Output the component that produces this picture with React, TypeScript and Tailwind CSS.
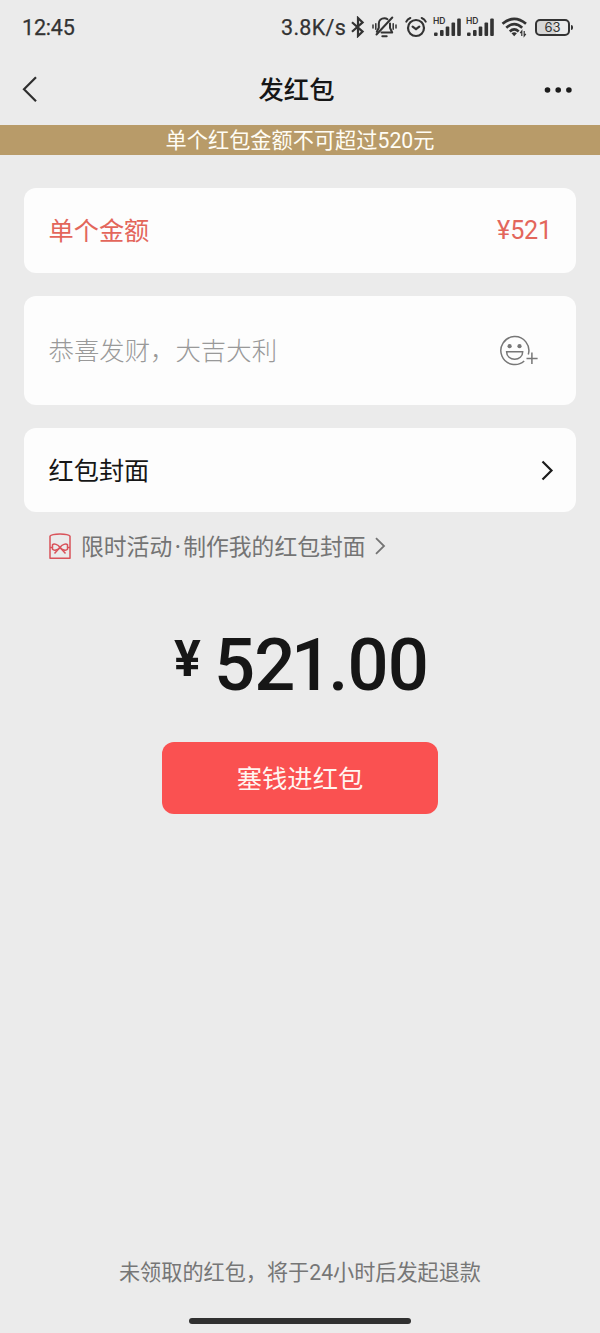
import type { ReactNode } from 'react';

const FONT = "font-['Noto_Sans_CJK_SC',sans-serif]";

function BluetoothIcon() {
  return (
    <svg className="ml-[3px] h-[22px] w-[16px] shrink-0" viewBox="0 0 16 22" fill="none" stroke="#333" strokeWidth="2.200" strokeLinejoin="miter">
      <path d="M2 6.200 12.600 15.600 8 20V2l4.600 4.400L2 15.800" />
    </svg>
  );
}

function MutedBellIcon() {
  return (
    <svg className="ml-[6px] h-[24px] w-[25px] shrink-0" viewBox="0 0 25 24" fill="none" stroke="#333" strokeWidth="2" strokeLinecap="round" strokeLinejoin="round">
      <path d="M15.500 4.200C14.600 3.500 13.600 3.200 12.400 3.200c-3.200 0-5.600 2.400-5.600 5.600v4L4.800 16.800M18 8.500v4.300l2.200 4.700H9.500" />
      <path d="M20.300 2.500 4.500 19.500" />
      <path d="M10.300 21.200h4.400" />
      <path d="M3.800 8.800v5.400M1 10v3M21.200 8.800v5.400M24 10v3" strokeWidth="1.500" />
    </svg>
  );
}

function AlarmIcon() {
  return (
    <svg className="ml-[8px] h-[24px] w-[22px] shrink-0" viewBox="0 0 22 24" fill="none" stroke="#333" strokeWidth="2.200" strokeLinecap="round">
      <circle cx="11" cy="13" r="8" />
      <path d="M7.600 11.600 11 14.200 14.300 11.600" />
      <path d="M1.300 6.700Q2.400 4.200 5.300 3M20.700 6.700Q19.600 4.200 16.700 3" strokeWidth="2" />
    </svg>
  );
}

function Signal() {
  return (
    <div className="relative h-[22px] w-[29px] shrink-0">
      <span className="absolute top-0 left-0 font-['Inter',sans-serif] text-[8.500px] leading-[10px] font-semibold text-[#333]">HD</span>
      <svg className="h-[22px] w-[29px]" viewBox="0 0 29 22" fill="#333">
        <rect x="1" y="16.500" width="3.600" height="3.500" rx="1" />
        <rect x="7" y="14" width="3.600" height="6" rx="1" />
        <rect x="12.700" y="10.500" width="3.600" height="9.500" rx="1" />
        <rect x="18.500" y="6.500" width="3.600" height="13.500" rx="1" />
        <rect x="24.200" y="2.500" width="3.600" height="17.500" rx="1" />
      </svg>
    </div>
  );
}

function WifiIcon() {
  return (
    <svg className="ml-[6px] h-[22px] w-[28px] shrink-0" viewBox="0 0 28 22" fill="none" stroke="#333" strokeWidth="2.700">
      <path d="M1.500 7.800Q13.200-2.200 25 7.800" />
      <path d="M5.300 11.700Q13.200 4.700 21.200 11.700" />
      <path d="M8.800 15.400Q13.200 11.500 17.700 15.400" />
      <path d="M13.200 20.200 10.500 17.300Q13.200 15.300 15.900 17.300Z" fill="#333" stroke="none" />
      <path d="M20.800 20v-5l-1.600 2.200M23.200 15v5l1.600-2.200" strokeWidth="1.200" />
    </svg>
  );
}

function Battery() {
  return (
    <div className="ml-[6px] flex shrink-0 items-center">
      <div className="flex h-[17px] w-[35px] items-center justify-center rounded-[5px] border-2 border-[#333] bg-[linear-gradient(90deg,#d6d6d6_62%,#ebebeb_62%)]">
        <span className="font-['Inter',sans-serif] text-[13px] leading-none text-[#333]">63</span>
      </div>
      <div className="ml-px h-[5px] w-[2px] rounded-r-full bg-[#333]" />
    </div>
  );
}

function StatusBar() {
  return (
    <div className="flex h-[54px] items-center pl-[22px]">
      <span className="w-[259px] pt-px font-['Roboto',sans-serif] text-[21.500px] leading-none tracking-[-0.200px] text-[#333] [-webkit-text-stroke:0.250px_#333]">12:45</span>
      <span className="w-[66px] pt-px font-['Roboto',sans-serif] text-[21.500px] leading-none tracking-[0.300px] whitespace-nowrap text-[#333] [-webkit-text-stroke:0.250px_#333]">3.8K/s</span>
      <BluetoothIcon />
      <MutedBellIcon />
      <AlarmIcon />
      <div className="ml-[6px] flex gap-[4px]">
        <Signal />
        <Signal />
      </div>
      <WifiIcon />
      <Battery />
    </div>
  );
}

function Card({ className, children }: { className: string; children: ReactNode }) {
  return <div className={`mx-6 flex items-center justify-between rounded-[12px] bg-[#fdfdfd] pl-[24.500px] ${className}`}>{children}</div>;
}

function Digits({ children }: { children: ReactNode }) {
  return <span className="font-['Roboto',sans-serif]">{children}</span>;
}

function EmojiIcon() {
  return (
    <svg className="h-[34px] w-[40px]" viewBox="0 0 40 34" fill="none" stroke="#777" strokeWidth="1.500">
      <path d="M24.200 27A14 14 0 1 1 28.300 20.500" />
      <circle cx="9.600" cy="12.200" r="2.100" fill="#777" stroke="none" />
      <circle cx="19.500" cy="12.200" r="2.100" fill="#777" stroke="none" />
      <path d="M6.600 17.700H22.700C22.700 22.500 19 25.300 14.700 25.300S6.600 22.500 6.600 17.700Z" />
      <path d="M26.500 24.500H37.600M31.900 18.500V30" />
    </svg>
  );
}

function GiftIcon() {
  return (
    <svg className="h-[27px] w-[22px]" viewBox="0 0 22 27" fill="none" stroke="#d9535a" strokeWidth="1.500" strokeLinejoin="round">
      <path d="M1 3.200Q2.500 1 11 1T21 3.200V25.300H1Z" />
      <path d="M1 14.500H3.500M18.500 14.500H21" />
      <path d="M11 14.500C9 11.500 5 10 3.500 11.800V16.300C5 18 9 17 11 14.500C13 11.500 17 10 18.500 11.800V16.300C17 18 13 17 11 14.500Z" />
      <path d="M11 14.500 5.500 20.500M11 14.500 16.500 20.500" />
    </svg>
  );
}

export default function App() {
  return (
    <div className={`flex h-[1333px] w-[600px] flex-col overflow-hidden bg-[#ebebeb] ${FONT}`}>
      <StatusBar />

      <header className="flex h-[71px] items-center justify-between pr-[27px] pl-[21px]">
        <svg className="mb-[2px] h-[28px] w-[30px]" viewBox="0 0 30 28" fill="none" stroke="#2e2e2e" strokeWidth="2.200">
          <path d="M15 2.300 3 14.300 15 26.300" />
        </svg>
        <h1 className="pr-px pb-[2px] text-[25.300px] leading-none font-medium text-[#161616]">发红包</h1>
        <svg className="h-[8px] w-[30px]" viewBox="0 0 30 8" fill="#1c1c1c">
          <circle cx="4.500" cy="4" r="2.800" />
          <circle cx="15.200" cy="4" r="2.800" />
          <circle cx="25.900" cy="4" r="2.800" />
        </svg>
      </header>

      <div className="flex h-[30px] items-center justify-center bg-[#b89b69] text-[21.200px] leading-none text-[#fffdf5]">
        <p>
          单个红包金额不可超过<Digits>520</Digits>元
        </p>
      </div>

      <Card className="mt-[33px] h-[85px] pr-[24px] text-[25.200px] leading-none text-[#e3665b]">
        <span className="pb-[2px]">单个金额</span>
        <span className="pt-px font-['Roboto',sans-serif] tracking-[-0.200px]">¥521</span>
      </Card>

      <Card className="mt-[23px] h-[109px] pr-[36px]">
        <span className="pb-px text-[25.400px] leading-none font-light text-[#999]">恭喜发财，大吉大利</span>
        <EmojiIcon />
      </Card>

      <Card className="mt-[23px] h-[84px] pr-[22px]">
        <span className="text-[25.200px] leading-none text-[#161616]">红包封面</span>
        <svg className="h-[22px] w-[14px]" viewBox="0 0 14 22" fill="none" stroke="#1c1c1c" strokeWidth="2.200">
          <path d="M2.500 2.500 11.500 11.500 2.500 20.500" />
        </svg>
      </Card>

      <div className="mt-[20px] flex h-[28px] items-center pl-[49px]">
        <GiftIcon />
        <span className="ml-[10px] flex text-[22.800px] leading-none text-[#747474]">
          限时活动<span className="w-[11px] text-center font-['Inter',sans-serif]">·</span>制作我的红包封面
        </span>
        <svg className="ml-[8px] h-[18px] w-[12px]" viewBox="0 0 12 18" fill="none" stroke="#747474" strokeWidth="1.800">
          <path d="M2 1.200 10 9 2 16.800" />
        </svg>
      </div>

      <div className="mt-[68px] flex h-[76px] items-start pl-[174px] font-['Roboto',sans-serif] leading-none font-medium text-[#161616]">
        <span className="mt-[6px] w-[40px] text-[50px] font-bold">¥</span>
        <span className="mt-[2px] text-[72.400px] tracking-[-0.800px]">
          5<span className="tracking-[-4.500px]">2</span>
          <span className="tracking-[-4px]">1</span>.00
        </span>
      </div>

      <button className="mx-auto mt-[38px] h-[72px] w-[276px] shrink-0 rounded-[12px] bg-[#fa5151] text-[25.300px] leading-none text-[#fff5f0]">塞钱进红包</button>

      <div className="flex-1" />
      <p className="text-center text-[21.150px] leading-none text-[#767676]">
        未领取的红包，将于<Digits>24</Digits>小时后发起退款
      </p>
      <div className="mx-auto mt-[35px] mb-[9px] h-[6px] w-[222px] shrink-0 rounded-full bg-[#303030]" />
    </div>
  );
}
